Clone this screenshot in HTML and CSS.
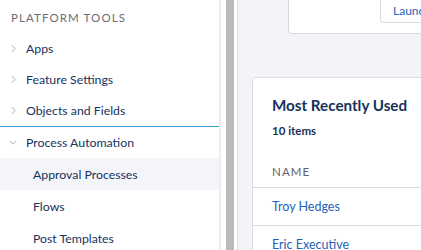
FILE: index.html
```html
<!doctype html>
<html lang="en">
    <head>
        <meta charset="UTF-8" />
        <title>Setup</title>
        <link rel="stylesheet" href="styles.css">
    </head>

    <body>
        <nav class="sidebar">
            <div class="nav-heading">Platform Tools</div>
            <div class="nav-item">
                <svg class="chevron" viewBox="0 0 6 10"><polyline points="1,1 5,5 1,9" /></svg>
                <span>Apps</span>
            </div>
            <div class="nav-item">
                <svg class="chevron" viewBox="0 0 6 10"><polyline points="1,1 5,5 1,9" /></svg>
                <span>Feature Settings</span>
            </div>
            <div class="nav-item">
                <svg class="chevron" viewBox="0 0 6 10"><polyline points="1,1 5,5 1,9" /></svg>
                <span>Objects and Fields</span>
            </div>
            <div class="nav-section">
                <div class="nav-item">
                    <svg class="chevron chevron-down" viewBox="0 0 10 6"><polyline points="1,1 5,5 9,1" /></svg>
                    <span>Process Automation</span>
                </div>
                <div class="nav-sub active">Approval Processes</div>
                <div class="nav-sub">Flows</div>
                <div class="nav-sub">Post Templates</div>
            </div>
        </nav>

        <div class="splitter">
            <div class="splitter-bar"></div>
        </div>

        <main class="content">
            <div class="top-card">
                <div class="launch-box">
                    <a href="#">Launch</a>
                </div>
            </div>

            <section class="card">
                <h2 class="card-title">Most Recently Used</h2>
                <div class="card-count">10 items</div>
                <div class="table">
                    <div class="table-head">Name</div>
                    <div class="table-row"><a href="#">Troy Hedges</a></div>
                    <div class="table-row"><a href="#">Eric Executive</a></div>
                </div>
            </section>
        </main>
    </body>
</html>
```

FILE: styles.css
```css
* {
    box-sizing: border-box;
    margin: 0;
    padding: 0;
}

body {
    display: flex;
    height: 250px;
    overflow: hidden;
    background: white;
    font-family: Lato, "Open Sans", sans-serif;
    color: #16325c;
}

a {
    color: #2462b8;
    text-decoration: none;
}

.sidebar {
    width: 221px;
    flex-shrink: 0;
    border-right: 2px solid #ededed;
}

.nav-heading {
    height: 33px;
    padding: 11px 0 0 11px;
    font-size: 11.5px;
    letter-spacing: 1.1px;
    text-transform: uppercase;
    color: #6b6d70;
}

.nav-item {
    display: flex;
    align-items: center;
    height: 31px;
    padding-left: 10px;
    font-size: 12.3px;
}

.chevron {
    width: 5px;
    height: 9px;
    margin: 0 10px 0 1px;
    fill: none;
    stroke: #a8acb3;
    stroke-width: 1.2;
}

.chevron-down {
    width: 8px;
    height: 5px;
    margin: 0 9px 0 -1px;
}

.nav-section {
    border-top: 1px solid #3b9bd8;
}

.nav-sub {
    display: flex;
    align-items: center;
    height: 32px;
    padding-left: 33px;
    font-size: 12.3px;
}

.nav-sub.active {
    background: #f4f5f8;
}

.splitter {
    width: 17px;
    flex-shrink: 0;
    padding-left: 5px;
    border-right: 1px solid #dedede;
}

.splitter-bar {
    width: 8px;
    height: 100%;
    background: #bababa;
}

.content {
    flex: 1;
    overflow: hidden;
    background: #f3f4f8;
    padding-left: 14px;
}

.top-card {
    width: 300px;
    height: 34px;
    margin-left: 36px;
    background: white;
    border: 1px solid #dddbda;
    border-top: none;
    border-radius: 0 0 0 4px;
}

.launch-box {
    width: 200px;
    height: 23px;
    margin-left: 91px;
    padding: 3px 0 0 12px;
    border-left: 1px solid #dddbda;
    border-bottom: 1px solid #dddbda;
    border-radius: 0 0 0 4px;
    font-size: 12px;
}

.card {
    width: 300px;
    margin-top: 43px;
    height: 200px;
    background: white;
    border: 1px solid #dddbda;
    border-radius: 4px;
}

.card-title {
    padding: 17px 0 0 19px;
    font-size: 15.2px;
    line-height: 20px;
    font-weight: bold;
}

.card-count {
    padding: 8px 0 0 19px;
    font-size: 11.5px;
    line-height: 16px;
    font-weight: bold;
}

.table {
    margin-top: 10px;
}

.table-head,
.table-row {
    display: flex;
    align-items: center;
    padding-left: 19px;
    border-bottom: 1px solid #dddbda;
}

.table-head {
    height: 39px;
    padding-top: 6px;
    font-size: 11.5px;
    letter-spacing: 1.1px;
    text-transform: uppercase;
    color: #5f6167;
}

.table-row {
    height: 38px;
    font-size: 12.5px;
}
```
